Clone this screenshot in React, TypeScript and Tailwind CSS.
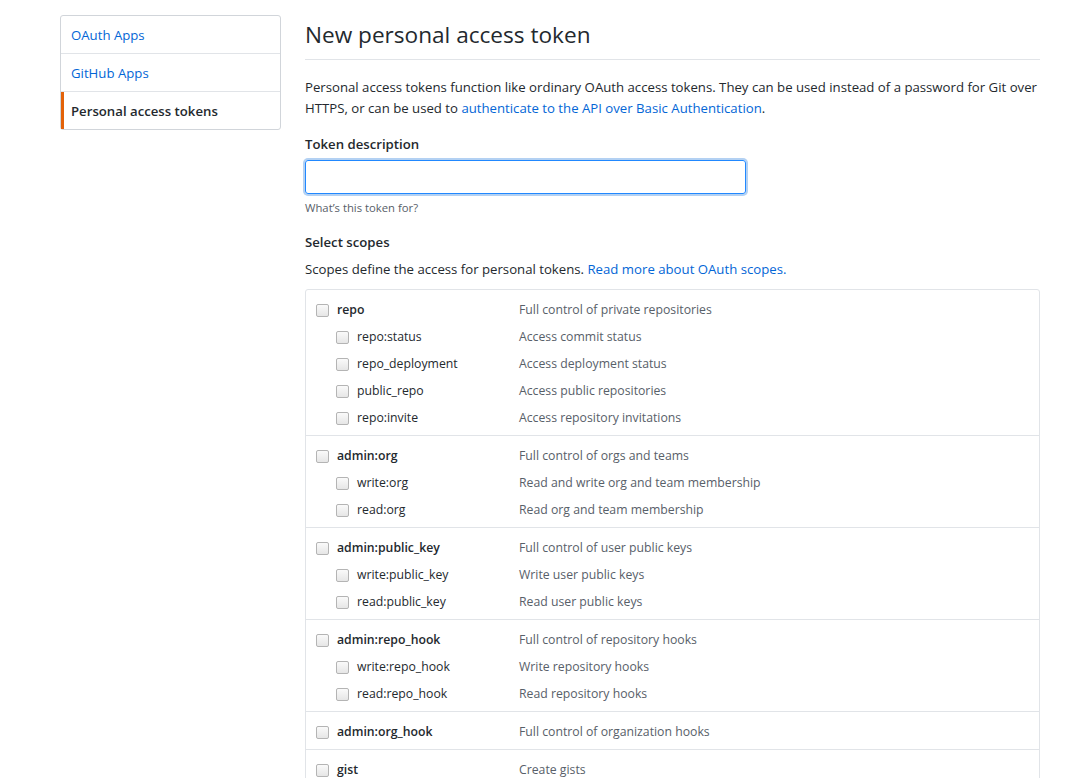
import { useState } from "react";

interface Scope {
  name: string;
  description: string;
  children?: { name: string; description: string }[];
}

const scopes: Scope[] = [
  {
    name: "repo",
    description: "Full control of private repositories",
    children: [
      { name: "repo:status", description: "Access commit status" },
      { name: "repo_deployment", description: "Access deployment status" },
      { name: "public_repo", description: "Access public repositories" },
      { name: "repo:invite", description: "Access repository invitations" },
    ],
  },
  {
    name: "admin:org",
    description: "Full control of orgs and teams",
    children: [
      { name: "write:org", description: "Read and write org and team membership" },
      { name: "read:org", description: "Read org and team membership" },
    ],
  },
  {
    name: "admin:public_key",
    description: "Full control of user public keys",
    children: [
      { name: "write:public_key", description: "Write user public keys" },
      { name: "read:public_key", description: "Read user public keys" },
    ],
  },
  {
    name: "admin:repo_hook",
    description: "Full control of repository hooks",
    children: [
      { name: "write:repo_hook", description: "Write repository hooks" },
      { name: "read:repo_hook", description: "Read repository hooks" },
    ],
  },
  { name: "admin:org_hook", description: "Full control of organization hooks" },
  { name: "gist", description: "Create gists" },
];

function Box({ checked, onClick }: { checked: boolean; onClick: () => void }) {
  return (
    <span
      onClick={onClick}
      className="w-[13px] h-[13px] shrink-0 rounded-[2px] border border-[#b4b4b4] bg-gradient-to-b from-[#fafafa] to-[#e6e6e6] flex items-center justify-center text-[10px] leading-none text-[#333] cursor-pointer"
    >
      {checked ? "✓" : ""}
    </span>
  );
}

export default function App() {
  const [checked, setChecked] = useState<Record<string, boolean>>({});
  const toggle = (key: string) => setChecked((prev) => ({ ...prev, [key]: !prev[key] }));

  return (
    <div className="min-h-screen bg-white text-[#24292e] text-[13.2px] font-['Open_Sans',sans-serif]">
      <div className="ml-[60px] w-[980px] pt-[15px] flex gap-[24px]">
        {/* sidebar */}
        <div className="w-[221px] shrink-0">
          <div className="border border-[#d1d5da] rounded-[3px]">
            <div className="h-[38px] pt-[2px] px-[10px] flex items-center border-b border-[#e1e4e8] text-[#0366d6]">OAuth Apps</div>
            <div className="h-[38px] pt-[2px] px-[10px] flex items-center border-b border-[#e1e4e8] text-[#0366d6]">GitHub Apps</div>
            <div className="h-[37px] pt-[2px] pl-[7px] pr-[10px] flex items-center border-l-[3px] border-[#e36209] font-semibold text-[#24292e]">
              Personal access tokens
            </div>
          </div>
        </div>

        {/* main */}
        <div className="w-[735px]">
          <div className="border-b border-[#e1e4e8] pb-[6px]">
            <h1 className="text-[22.6px] font-normal leading-[36px] mt-[2px]">New personal access token</h1>
          </div>

          <p className="mt-[17px] leading-[21px]">
            Personal access tokens function like ordinary OAuth access tokens. They can be used instead of a password for Git over
            <br />
            HTTPS, or can be used to <span className="text-[#0366d6]">authenticate to the API over Basic Authentication</span>.
          </p>

          <div className="mt-[15px] font-semibold leading-[20px]">Token description</div>
          <div className="mt-[6px] w-[441px] h-[34px] rounded-[3px] border border-[#2188ff] shadow-[0_0_0_2px_rgba(3,102,214,0.3)]" />
          <div className="mt-[6px] text-[11.3px] text-[#586069] leading-[16px]">What’s this token for?</div>

          <div className="mt-[16px] font-semibold leading-[20px]">Select scopes</div>
          <p className="mt-[7px] leading-[20px]">
            Scopes define the access for personal tokens.{" "}
            <span className="text-[#0366d6]">Read more about OAuth scopes.</span>
          </p>

          <div className="mt-[10px] border border-[#e1e4e8] rounded-[3px] text-[12.25px]">
            {scopes.map((scope, i) => (
              <div key={scope.name} className={`pt-[7px] pb-[3px] ${i > 0 ? "border-t border-[#e1e4e8]" : ""}`}>
                <div className="h-[27px] flex items-center">
                  <div className="w-[213px] pl-[10px] flex items-center gap-[8px] shrink-0">
                    <Box checked={!!checked[scope.name]} onClick={() => toggle(scope.name)} />
                    <span className="font-semibold">{scope.name}</span>
                  </div>
                  <span className="text-[#586069]">{scope.description}</span>
                </div>
                {scope.children?.map((child) => (
                  <div key={child.name} className="h-[27px] flex items-center">
                    <div className="w-[213px] pl-[30px] flex items-center gap-[8px] shrink-0">
                      <Box checked={!!checked[child.name]} onClick={() => toggle(child.name)} />
                      <span>{child.name}</span>
                    </div>
                    <span className="text-[#586069]">{child.description}</span>
                  </div>
                ))}
              </div>
            ))}
          </div>
        </div>
      </div>
    </div>
  );
}
